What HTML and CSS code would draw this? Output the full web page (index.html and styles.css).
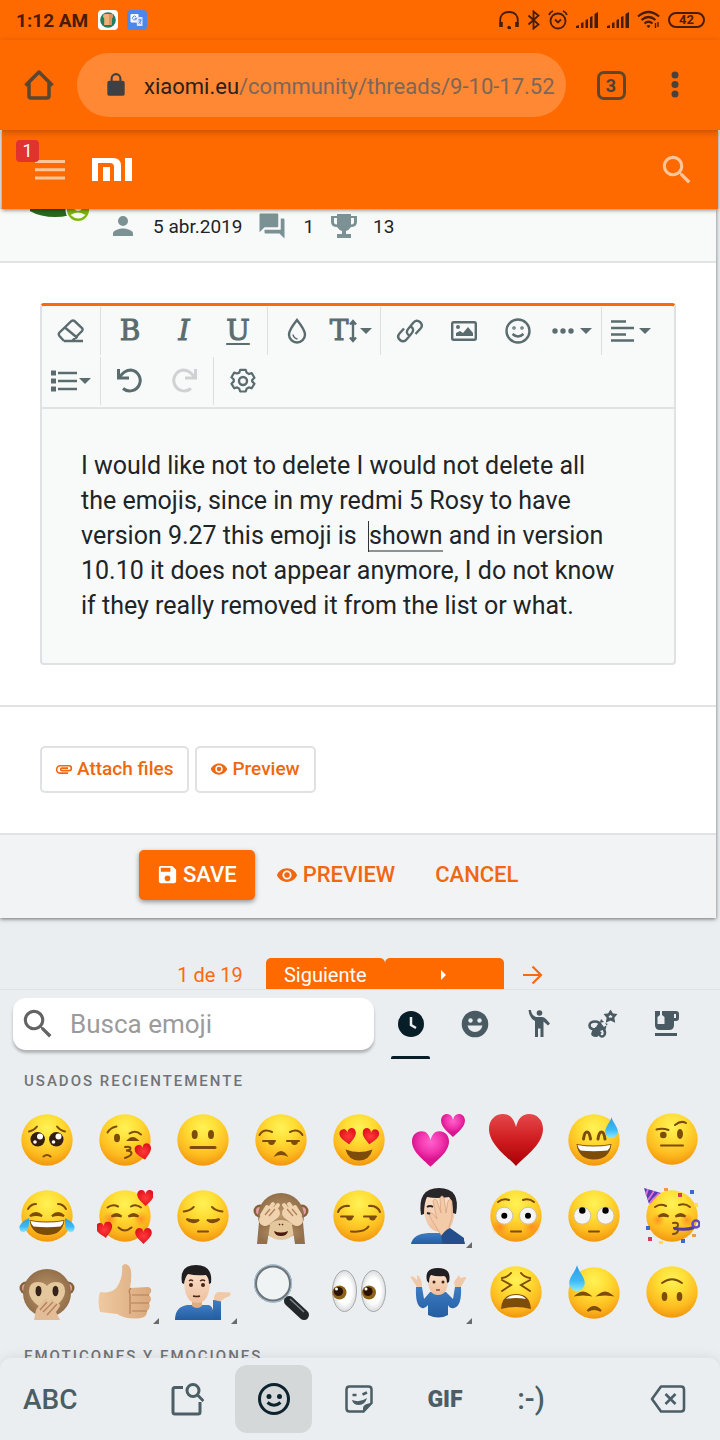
FILE: index.html
```html
<!DOCTYPE html>
<html lang="es">
<head>
<meta charset="utf-8">
<meta name="viewport" content="width=device-width, initial-scale=1">
<title>xiaomi.eu community</title>
<link rel="stylesheet" href="styles.css">
</head>
<body>
<svg class="defs" aria-hidden="true">
  <defs>
    <radialGradient id="gFace" cx=".5" cy=".26" r=".76"><stop offset="0" stop-color="#fff256"/><stop offset=".35" stop-color="#ffde35"/><stop offset=".72" stop-color="#fdbb20"/><stop offset="1" stop-color="#f0930c"/></radialGradient>
    <linearGradient id="gRed" x2="0" y2="1"><stop offset="0" stop-color="#e5484a"/><stop offset=".5" stop-color="#cf1c20"/><stop offset="1" stop-color="#a90003"/></linearGradient>
    <radialGradient id="gHeart"><stop offset="0" stop-color="#ff3b3b"/><stop offset="1" stop-color="#e3141e"/></radialGradient>
    <radialGradient id="gPink" cy=".3"><stop offset="0" stop-color="#ff62cc"/><stop offset=".6" stop-color="#f235ae"/><stop offset="1" stop-color="#d9148f"/></radialGradient>
    <linearGradient id="gDrop" x2="0" y2="1"><stop offset="0" stop-color="#2d9be6"/><stop offset=".6" stop-color="#3cb9f5"/><stop offset="1" stop-color="#8be9ff"/></linearGradient>
    <radialGradient id="gBlush"><stop offset="0" stop-color="#ff7a1e" stop-opacity=".7"/><stop offset="1" stop-color="#ff8c1e" stop-opacity="0"/></radialGradient>
    <radialGradient id="gFur"><stop offset="0" stop-color="#b9966a"/><stop offset="1" stop-color="#93704a"/></radialGradient>
    <linearGradient id="gSkin"><stop offset="0" stop-color="#efc9a0"/><stop offset="1" stop-color="#d9a87c"/></linearGradient>
    <linearGradient id="gPale" x2="0" y2="1"><stop offset="0" stop-color="#fce3cf"/><stop offset="1" stop-color="#eebf9c"/></linearGradient>
    <linearGradient id="gBlue" x2="0" y2="1"><stop offset="0" stop-color="#3d7cc4"/><stop offset="1" stop-color="#245d9f"/></linearGradient>
    <radialGradient id="gWhite"><stop offset=".6" stop-color="#fff"/><stop offset="1" stop-color="#d9dcde"/></radialGradient>
  </defs>
  <symbol id="face" viewBox="0 0 56 56"><circle cx="28" cy="28" r="25.7" fill="url(#gFace)"/></symbol>
  <symbol id="heart" viewBox="0 0 54 52"><path d="M27 52C20 44 0 31 0 15 0 6 6 0 14 0c7 0 11 5 13 13C29 5 33 0 40 0c8 0 14 6 14 15 0 16-20 29-27 37z"/></symbol>
  <symbol id="drop" viewBox="0 0 12 20"><path d="M6 0c1 5 6 9 6 14a6 6 0 0 1-12 0C0 9 5 5 6 0z" fill="url(#gDrop)"/></symbol>
  <symbol id="eye" viewBox="0 0 24 24"><path d="M12 4.500C7 4.500 2.730 7.610 1 12c1.730 4.390 6 7.500 11 7.500s9.270-3.110 11-7.500c-1.730-4.390-6-7.500-11-7.500zM12 17c-2.760 0-5-2.240-5-5s2.240-5 5-5 5 2.240 5 5-2.240 5-5 5zm0-8a3 3 0 1 0 0 6 3 3 0 0 0 0-6z"/></symbol>
  <symbol id="search" viewBox="0 0 24 24"><path d="M15.500 14h-.79l-.28-.27A6.471 6.471 0 0 0 16 9.500 6.500 6.500 0 1 0 9.500 16c1.610 0 3.090-.59 4.230-1.570l.27.28v.79l5 4.990L20.490 19l-4.990-5zm-6 0C7.010 14 5 11.990 5 9.500S7.010 5 9.500 5 14 7.010 14 9.500 11.990 14 9.500 14z"/></symbol>
  <symbol id="signal" viewBox="0 0 24 18"><path d="M1 17v-2l3-1v3zM6 17v-5l2.500-1v6zM10.500 17V9L13 8v9zM15 17V6l2.500-1v12zM19.500 17V3L23 1v16z"/></symbol>
</svg>

<header class="status">
  <span class="clock">1:12 AM</span>
  <svg class="app" viewBox="0 0 20 20"><rect width="20" height="20" rx="4" fill="#fff"/><circle cx="10" cy="10" r="7.800" fill="#1d7e63"/><path d="M5 6q0-2 2-2h6q2 0 2 2t-1.200 2.200V15H6.200V8.200Q5 8 5 6z" fill="#edb277"/><path d="M11 4h2q2 0 2 2t-1.200 2.200V15H11z" fill="#d9945a"/></svg>
  <svg class="app app-2" viewBox="0 0 20 20"><rect width="20" height="20" rx="4" fill="#4d86ec"/><rect x="3.500" y="4" width="8" height="8.500" rx="1" fill="#fff"/><path d="M9 7h6.500v9H10z" fill="#dbe5fa"/><path d="M9 6.700A2 2 0 1 0 9.500 8.300H7.500M11.500 10h3M13 9v1m1 0q-1 3-2.500 3.500m.5-2q.8 1.500 2 2" fill="none" stroke="#4d86ec"/></svg>
  <span class="push"></span>
  <svg width="22" height="20" viewBox="0 0 22 20" fill="none" stroke="#471d07" stroke-width="1.800"><path d="M3 15C0 5 6 2 11 2s11 3 8 13M10 18h3"/><path d="M3 12v5M19 12v5" stroke-width="3.500"/><circle cx="11" cy="17.500" r=".8"/></svg>
  <svg width="14" height="20" viewBox="0 0 14 20" fill="none" stroke="#471d07" stroke-width="1.800"><path d="M1.500 5.500l10 9-5 4V1.500l5 4-10 9"/></svg>
  <svg width="20" height="20" viewBox="0 0 20 20" fill="none" stroke="#471d07" stroke-width="1.800"><circle cx="10" cy="11" r="7.500"/><path d="M1 5q1-3 4-4m14 4q-1-3-4-4M7 9.500l3 3 3-3"/></svg>
  <svg width="24" height="18" fill="#471d07"><use href="#signal"/></svg>
  <svg width="24" height="18" fill="#471d07"><use href="#signal"/></svg>
  <svg width="24" height="20" viewBox="0 0 24 20" fill="none" stroke="#471d07" stroke-width="2.200"><path d="M1 6.500q10.500-9 21 0M4.500 10q7-6 14 0M7.500 13.500q4-3.500 8 0"/><path d="M11.500 18l-2-2q2-2 4 0z" fill="#471d07" stroke="none"/><path d="M18.500 13v5m2.500-6v5" stroke-width="1.400"/></svg>
  <span class="battery">42</span>
</header>

<nav class="browser">
  <button class="home" aria-label="Inicio"><svg width="30" height="32" viewBox="0 0 30 32" fill="none" stroke="#5b4630" stroke-width="3.500" stroke-linejoin="round"><path d="M1.500 16.500L15 3l13.500 13.500M5 14v13q0 2 2 2h16q2 0 2-2V14"/></svg></button>
  <button class="address"><svg width="26" height="26" viewBox="0 0 24 24" fill="#3e4043"><path d="M18 8h-1V6A5 5 0 0 0 7 6v2H6a2 2 0 0 0-2 2v10c0 1.100.9 2 2 2h12a2 2 0 0 0 2-2V10a2 2 0 0 0-2-2zM8.900 8V6a3.100 3.100 0 0 1 6.200 0v2z"/></svg><span class="url"><b>xiaomi.eu</b>/community/threads/9-10-17.52</span></button>
  <button class="tabs-count"><span>3</span></button>
  <button class="more" aria-label="Más"><svg width="8" height="28" viewBox="0 0 8 28" fill="#4c4139"><circle cx="4" cy="4" r="3.500"/><circle cx="4" cy="13.500" r="3.500"/><circle cx="4" cy="23" r="3.500"/></svg></button>
</nav>

<main class="page">
  <header class="site">
    <button class="menu" aria-label="Menú"><svg width="30" height="20" viewBox="0 0 30 20" stroke="#ffc59a" stroke-width="3"><path d="M0 1.500h30M0 9.800h30M0 18h30"/></svg><span class="badge">1</span></button>
    <a class="logo" href="#" aria-label="Mi"><svg width="40" height="24" viewBox="0 0 40 24" fill="#fff"><path d="M0 0h21q8 0 8 8v15h-7V9q0-4-4-4H6v18H0zM11 9h7v14h-7zM33 0h7v23h-7z"/></svg></a>
    <button class="find" aria-label="Buscar"><svg width="38" height="38" fill="#ffc59a"><use href="#search"/></svg></button>
  </header>
  <article class="card">
    <section class="user">
      <svg class="avatar" width="64" height="16" viewBox="0 0 64 16"><ellipse cx="25" cy="-12" rx="35" ry="20" fill="#28691f"/><circle cx="48" cy="1" r="12.500" fill="#f8fafa"/><circle cx="48" cy="1" r="11" fill="#80b70e"/><path d="M40.500 6q7.500-5 15 0-7 7-15 0z" fill="#f8fafa"/><circle cx="48" cy="-2" r="4" fill="#f8fafa"/></svg>
      <svg class="u-person" width="30" height="30" viewBox="0 0 24 24"><path d="M12 12a4 4 0 1 0 0-8 4 4 0 0 0 0 8zm0 2c-2.670 0-8 1.340-8 4v2h16v-2c0-2.660-5.330-4-8-4z"/></svg><span class="u-date">5 abr.2019</span>
      <svg width="30" height="30" viewBox="0 0 24 24"><path d="M21 6h-2v9H6v2c0 .55.45 1 1 1h11l4 4V7c0-.55-.45-1-1-1zm-4 6V3c0-.55-.45-1-1-1H3c-.55 0-1 .45-1 1v14l4-4h10c.55 0 1-.45 1-1z"/></svg><span class="u-num">1</span>
      <svg width="26" height="26" viewBox="0 0 26 26"><path d="M6 1h14v2h6v6q0 5-6 5-2 3-5 4v3h5v4H6v-4h5v-3q-3-1-5-4-6 0-6-5V3h6zM3 5v4q0 2.500 3 2.500V5zm20 0h-3v6.500q3 0 3-2.500z" fill-rule="evenodd"/></svg><span class="u-num">13</span>
    </section>
    <section class="compose">
      <div class="editor">
        <div class="toolbar" role="toolbar">
          <div class="group"><button aria-label="Clear"><svg width="28" height="24" viewBox="0 0 28 24"><path d="M7 22l-4.500-5q-1.500-2 0-3.500L14.500 2q1.500-1 3 0l7.500 7q1.200 1.500 0 3L15 22H7h19M8.500 9l12 10"/></svg></button></div>
          <div class="group"><button class="serif">B</button><button class="serif italic">I</button><button class="serif under">U</button></div>
          <div class="group"><button aria-label="Color"><svg width="20" height="26" viewBox="0 0 20 26"><path d="M10 2Q2 12 2 16.500a8 8 0 0 0 16 0Q18 12 10 2z"/><path d="M6 16.500q.5 3.500 4.500 4.500" stroke-width="1.600"/></svg></button><button aria-label="Size"><span class="serif">T</span><svg width="10" height="24" viewBox="0 0 10 24"><path d="M5 3v18M2 5.500L5 2l3 3.500M2 18.500L5 22l3-3.500"/></svg><i class="caret"></i></button></div>
          <div class="group"><button aria-label="Link"><svg width="28" height="28" viewBox="0 0 28 28" stroke-width="3"><path d="M13 18.500q-4-3-.5-7l5-6q3-3.500 6.500-.5t.5 6.500l-5 5.500M15 9.500q4 3 .5 7l-5 6q-3 3.500-6.500.5t-.5-6.500l4.500-5"/></svg></button><button aria-label="Image"><svg width="26" height="20" viewBox="0 0 26 20"><rect x="1.200" y="1.200" width="23.600" height="17.600" rx="1.500"/><path d="M5 15v-3l4-2 3 2 5-6 5 6v3z" fill="#5b6c6f" stroke="none"/><circle cx="7" cy="6" r="2" fill="#5b6c6f" stroke="none"/></svg></button><button aria-label="Smilies"><svg width="26" height="26" viewBox="0 0 26 26"><circle cx="13" cy="13" r="11.500"/><path d="M7.500 16q5.500 5 11 0"/><circle cx="9" cy="10" r=".6"/><circle cx="17" cy="10" r=".6"/></svg></button><button aria-label="Insert"><svg width="24" height="6" viewBox="0 0 24 6"><g fill="#5b6c6f" stroke="none"><circle cx="3" cy="3" r="2.700"/><circle cx="11" cy="3" r="2.700"/><circle cx="19" cy="3" r="2.700"/></g></svg><i class="caret gap"></i></button></div>
          <div class="group last"><button aria-label="Align"><svg width="24" height="22" viewBox="0 0 24 22"><path d="M0 1.500h15M0 8h23M0 14.500h15M0 20.500h23"/></svg><i class="caret gap"></i></button></div>
          <div class="group"><button aria-label="List"><svg width="26" height="22" viewBox="0 0 26 22"><path d="M7 3h19M7 11h19M7 19h19"/><path d="M0 3h5M0 11h5M0 19h5" stroke-width="5"/></svg><i class="caret"></i></button></div>
          <div class="group"><button aria-label="Undo"><svg class="thick" width="28" height="28" viewBox="0 0 28 28"><path d="M2.500 2v9H13M3 11Q8 3 15 3a10.500 10.500 0 1 1-8 18.500"/></svg></button><button aria-label="Redo" disabled><svg class="thick" width="28" height="28" viewBox="0 0 28 28"><path d="M25.500 2v9H15M25 11q-5-8-12-8a10.500 10.500 0 1 0 8 18.500"/></svg></button></div>
          <div class="group last"><button aria-label="Settings"><svg width="26" height="26" viewBox="0 0 26 26" stroke-linejoin="round"><path d="M10 1.500h6l1 3 2.500 1.500 3-1 3 5-2.500 2.500v1.500l2.500 2.500-3 5-3-1-2.500 1.500-1 3h-6l-1-3L6.500 20.500l-3 1-3-5L3 14v-2L.5 9.500l3-5 3 1L9 4.500z" transform="translate(1 .5) scale(.92)"/><circle cx="13" cy="13" r="4"/></svg></button></div>
        </div>
        <div class="text" role="textbox" aria-label="Message" aria-multiline="true" contenteditable="true" spellcheck="false">I would like not to delete I would not delete all<br>the emojis, since in my redmi 5 Rosy to have<br>version 9.27 this emoji is &nbsp;<span class="composing">shown</span> and in version<br>10.10 it does not appear anymore, I do not know<br>if they really removed it from the list or what.</div>
      </div>
    </section>
    <section class="extras">
      <button class="outline"><svg width="18" height="18" viewBox="1 1 22 22"><path d="M2 12.500C2 9.460 4.460 7 7.500 7H18a4 4 0 0 1 0 8H9.500a2.500 2.500 0 0 1 0-5H17v2H9.410c-.55 0-.55 1 0 1H18a2 2 0 0 0 0-4H7.500a3.500 3.500 0 0 0 0 7H17v2H7.500C4.460 18 2 15.540 2 12.500z"/></svg>Attach files</button>
      <button class="outline"><svg width="18" height="18"><use href="#eye"/></svg>Preview</button>
    </section>
    <section class="actions">
      <button class="save"><svg width="23" height="23" viewBox="0 0 24 24"><path d="M17 3H5a2 2 0 0 0-2 2v14c0 1.100.89 2 2 2h14c1.100 0 2-.9 2-2V7l-4-4zm-5 16a3 3 0 1 1 0-6 3 3 0 0 1 0 6zm3-10H5V5h10v4z"/></svg>SAVE</button>
      <button class="flat"><svg width="22" height="22"><use href="#eye"/></svg>PREVIEW</button>
      <button class="flat cancel">CANCEL</button>
    </section>
  </article>
  <nav class="pager">
    <a class="count" href="#">1 de 19</a>
    <a class="pg" href="#">Siguiente</a><a class="pg" href="#" aria-label="Siguiente"><svg width="6" height="10" viewBox="0 0 6 10"><path d="M0 0l5 5-5 5z" fill="#fff"/></svg></a>
    <a class="end" href="#" aria-label="Última"><svg width="20" height="20" viewBox="0 0 20 20" fill="none" stroke="#f96a0b" stroke-width="2.200"><path d="M0 10h18M9.500 1.500L18 10l-8.500 8.500"/></svg></a>
  </nav>
</main>

<section class="keyboard">
  <div class="kb-top">
    <label class="kb-search"><svg width="38" height="38" fill="#636363"><use href="#search"/></svg><input type="text" placeholder="Busca emoji" aria-label="Busca emoji"></label>
    <div class="cats">
      <button class="cat on" aria-label="Recientes"><svg width="28" height="28" viewBox="0 0 28 28"><circle cx="14" cy="14" r="13" fill="#071e29"/><path d="M14 7v8l5 3" fill="none" stroke="#e9edf0" stroke-width="2.500"/></svg></button>
      <button class="cat" aria-label="Caras"><svg width="28" height="28" viewBox="0 0 28 28"><circle cx="14" cy="14" r="13.300"/><g fill="#e9edf0"><circle cx="9.500" cy="10.500" r="2.200"/><circle cx="18.500" cy="10.500" r="2.200"/><path d="M6.500 15.500h15q-1.500 6.500-7.500 6.500t-7.500-6.500z"/></g></svg></button>
      <button class="cat" aria-label="Personas"><svg width="24" height="28" viewBox="0 0 24 28"><circle cx="12.500" cy="3" r="2.800"/><path d="M1.500 0h2.500q0 5 5 7h6q2 0 4 2l4 4.500-2 2-4.500-4V27h-3v-8.500h-2.500V27H8V11Q2 8 1.500 0z"/></svg></button>
      <button class="cat" aria-label="Naturaleza"><svg width="30" height="28" viewBox="0 0 30 28"><g fill="none" stroke="#495a62" stroke-width="2.600"><path d="M22.500 2l1.500 2.500 3 .5-2 2.500.5 3-3-1.500-3 1.500.5-3-2-2.500 3-.5z"/><ellipse cx="7" cy="15.500" rx="5.500" ry="4"/><ellipse cx="14" cy="22.500" rx="3" ry="4"/></g><path d="M4 21q-3 6 5 6l7-6q5-5 0-9l-5 1zM12 12l1-3 4 4 3 1-4 3z"/><circle cx="7" cy="15.500" r="1.800" fill="#e9edf0"/><path d="M12 21l3-1v4z" fill="#e9edf0"/></svg></button>
      <button class="cat" aria-label="Comida"><svg width="26" height="26" viewBox="0 0 26 26"><path d="M1 0h21q3 0 3 3v4q0 3-3 3h-2v4q0 5-5 5H6q-5 0-5-5zm19 3v4h2V3zM1 22h22v3H1z" fill-rule="evenodd"/><path d="M6 0v4L3.500 6v7h7V6L8 4V0z" fill="#e9edf0"/></svg></button>
    </div>
  </div>
  <div class="kb-list">
    <h2 class="kb-title">USADOS RECIENTEMENTE</h2>
    <div class="grid">
      <button aria-label="Suplicante"><svg viewBox="0 0 56 56"><use href="#face"/><g class="ln"><path d="M10 19.500q5-1 8-5M38 14.500q3 4 8 5M24.500 44.500q3.500-3 7 0"/></g><circle cx="18.700" cy="27.300" r="7.200" fill="#351d12"/><circle cx="37.300" cy="27.300" r="7.200" fill="#351d12"/><g fill="#fff"><circle cx="21" cy="24.500" r="3"/><circle cx="39.500" cy="24.500" r="3"/><circle cx="16" cy="30" r="1.800"/><circle cx="34.500" cy="30" r="1.800"/></g></svg></button>
      <button aria-label="Beso"><svg viewBox="0 0 56 56"><use href="#face"/><ellipse class="ey" cx="20" cy="26" rx="3" ry="4.200"/><g class="ln"><path d="M10.500 20.500q3-5 9-6M32.500 21.500q6-4 11.500 1M31.500 28q4-4 8.500 0zM28 35q5-1 5.500 1t-4.500 2.500q5 0 5.500 2.500T28 46"/></g><use href="#heart" x="38" y="32" width="17" height="16" fill="url(#gHeart)" transform="rotate(-12 46 40)"/></svg></button>
      <button aria-label="Neutral"><svg viewBox="0 0 56 56"><use href="#face"/><ellipse class="ey" cx="19.700" cy="22.500" rx="3" ry="4.500"/><ellipse class="ey" cx="36" cy="22.500" rx="3" ry="4.500"/><path class="ln w3" d="M16 35.500h24"/></svg></button>
      <button aria-label="Molesto"><svg viewBox="0 0 56 56"><use href="#face"/><g class="ln"><path d="M6.500 23q4-7 12.500-3M37 20q8-4 12.500 3M10 29h12M34 29h12"/></g><path class="ey" d="M15 29h7q0 4-3.500 4T15 29zM38 29h7q0 4-3.500 4T38 29zM20.500 45q7.500-12 15 0-7.500-4-15 0z"/></svg></button>
      <button aria-label="Enamorado"><svg viewBox="0 0 56 56"><use href="#face"/><g fill="url(#gHeart)"><use href="#heart" x="8.500" y="16.500" width="17" height="16" transform="rotate(-8 17 24)"/><use href="#heart" x="31" y="16.500" width="17" height="16" transform="rotate(8 39 24)"/></g><path d="M14.500 37.500q13.500 5 27 0-3 11-13.500 11t-13.500-11z" fill="#7d4b0a"/></svg></button>
      <button aria-label="Dos corazones"><svg viewBox="0 0 56 56"><g fill="url(#gPink)"><use href="#heart" x="2" y="19" width="37" height="36"/><use href="#heart" x="31" y="2" width="24" height="23"/></g></svg></button>
      <button aria-label="Corazón"><svg viewBox="0 0 56 56"><use href="#heart" x="1" y="2" width="54" height="52" fill="url(#gRed)"/></svg></button>
      <button aria-label="Sudor"><svg viewBox="0 0 56 56"><use href="#face"/><g class="ln w3"><path d="M17.500 27q1-7 3.500-7t3.500 7M32 27q1-7 3.500-7t3.500 7"/></g><path d="M10.500 32q17.500 3 35 0-2 15.500-17.500 15.500T10.500 32z" fill="#7d4b0a"/><path d="M11.500 33q16.500 3 33 0-.5 4-3 5.500-13.500 1.500-27 0-2.500-2-3-5.500z" fill="#fff"/><use href="#drop" x="39" y="5" width="13" height="21"/></svg></button>
      <button aria-label="Ceja levantada"><svg viewBox="0 0 56 56"><use href="#face" y="-1"/><ellipse class="ey" cx="19.300" cy="23" rx="3.300" ry="3.200"/><ellipse class="ey" cx="36" cy="22" rx="3" ry="5"/><path class="ln" d="M12.500 17.500q6-1.500 12 .500M31 13q6-5 11-2M17 33.500h22"/></svg></button>

      <button aria-label="Risa"><svg viewBox="0 0 56 56"><use href="#face"/><g class="ln"><path d="M9 21q3-5 8-5M39 16q5 0 8 5M11 28q6-6 12 0-6-2-12 0zM33 28q6-6 12 0-6-2-12 0z"/></g><path d="M10.500 32q17.500 3 35 0-2 15-17.500 15T10.500 32z" fill="#7d4b0a"/><path d="M11.500 33q16.500 3 33 0-.5 4-3 5.500-13.500 1.500-27 0-2.500-2-3-5.500z" fill="#fff"/><path d="M10 30Q0 35 .5 40t5 4Q11 42 10 30zM46 30q10 5 9.500 10t-5 4Q45 42 46 30z" fill="url(#gDrop)"/></svg></button>
      <button aria-label="Cariño"><svg viewBox="0 0 56 56"><use href="#face"/><circle cx="13" cy="31" r="8" fill="url(#gBlush)"/><circle cx="44" cy="31" r="8" fill="url(#gBlush)"/><g class="ln"><path d="M10.500 19.500q5-4 10.500-1M34 18.500q5-3 10 1M14.500 28.500q5-5 10 0-5-1.500-10 0zM31.500 28.500q5-5 10 0-5-1.500-10 0zM21.500 39.500q6 6 13 0"/></g><g fill="url(#gHeart)"><use href="#heart" x="40" y="2" width="17" height="16"/><use href="#heart" x="-1" y="34" width="17" height="16" transform="rotate(-10 8 42)"/><use href="#heart" x="38" y="40" width="17" height="16"/></g></svg></button>
      <button aria-label="Pensativo"><svg viewBox="0 0 56 56"><use href="#face"/><path class="ln" d="M8.700 23.500q6-.5 10-4.500M37 19q4 4 10.500 4.500M11.500 31q6 6 12.500 1-6 1-12.500-1zM32 32q6.500 5 12.500-1-6 2-12.500 1zM23 43.500h10"/></svg></button>
      <button aria-label="Mono ojos tapados"><svg viewBox="0 0 56 56"><circle cx="7" cy="23" r="6.500" fill="#86623b"/><circle cx="49" cy="23" r="6.500" fill="#86623b"/><circle cx="7" cy="23" r="4" fill="#e79ea1"/><circle cx="49" cy="23" r="4" fill="#e79ea1"/><circle cx="28" cy="28" r="23" fill="url(#gFur)"/><ellipse cx="28" cy="42" rx="14" ry="10" fill="#e5c79e"/><path d="M21 43q7 3 14 0-1 5-7 5t-7-5z" fill="#4a1c10"/><path d="M4 56l2-22 11 3-3 19zM52 56l-2-22-11 3 3 19z" fill="url(#gFur)"/><g fill="none" stroke="#efd2ae" stroke-linecap="round"><path d="M12 32l9-7M44 32l-9-7" stroke-width="12"/><path d="M9 27l5-8M12 27l8-11M16 29l9-12M47 27l-5-8M44 27l-8-11M40 29l-9-12" stroke-width="4"/></g><g class="cr"><path d="M12 27l5-6M16 28l6-7M44 27l-5-6M40 28l-6-7"/></g><path d="M26 36l1 1m3-1l-1 1" stroke="#4a2c14" stroke-width="1.500"/></svg></button>
      <button aria-label="Sonrisa pícara"><svg viewBox="0 0 56 56"><use href="#face"/><path class="ln" d="M7 24q3-7 11-6M38 18q8-1 11 6M10 28.500h12M33 28.500h12M20 43.500q14 1 17.500-5"/><path class="ey" d="M15 28h7q0 4.500-3.500 4.500T15 28zM38 28h7q0 4.500-3.500 4.500T38 28z"/></svg></button>
      <button class="skin" aria-label="Palmada"><svg viewBox="0 0 56 56"><path d="M1 56q2-10 17-11h22q14 1 15 11z" fill="url(#gBlue)"/><path d="M13 16q0-12 16-12t16 14q0 26-15 26T13 16z" fill="url(#gPale)"/><path d="M11 27Q7 0 29 0t17 26l-3-1q0-12-4-16-12 2-22 0-3 6-3 17z" fill="#292629"/><path d="M17 19q3-2 6 0M17 25l4 1" stroke="#292629" stroke-width="2" fill="none"/><path d="M33 50L20 29q-1-4 2-4l5 6-4-18q2-4 4 0l4 12-1-15q2-4 4 0l2 15 2-12q3-3 4 1v15l-3 10 1 9z" fill="#f4cba9" stroke="#d8a47f" stroke-width=".8"/><path d="M31 48q4-6 9-8l14 10v6H33z" fill="#254f8c"/></svg></button>
      <button aria-label="Sonrojado"><svg viewBox="0 0 56 56"><use href="#face"/><circle cx="12" cy="39" r="9" fill="url(#gBlush)"/><circle cx="44" cy="39" r="9" fill="url(#gBlush)"/><circle cx="16.300" cy="27.700" r="8.500" class="bw"/><circle cx="40" cy="27.700" r="8.500" class="bw"/><circle cx="16.300" cy="27.700" r="3"/><circle cx="40" cy="27.700" r="3"/><path class="ln" d="M10 14q5-4 11-2M35 12q6-2 11 2M23 43.500h10"/></svg></button>
      <button aria-label="Ojos en blanco"><svg viewBox="0 0 56 56"><use href="#face"/><circle cx="16.300" cy="27.700" r="8.500" class="bw"/><circle cx="39.500" cy="27.700" r="8.500" class="bw"/><circle cx="16.300" cy="22.500" r="3.200"/><circle cx="39.500" cy="22.500" r="3.200"/><path class="ln" d="M23 43.500h10"/></svg></button>
      <button aria-label="Fiesta"><svg viewBox="0 0 56 56"><use href="#face"/><path d="M0 0l17 5Q8 9 5 16z" fill="#593bb2"/><path d="M4 1l-2 6M10 3L4 12M15 5l-9 10" stroke="#e173d6" stroke-width="1.800"/><circle cx="14" cy="32" r="7" fill="url(#gBlush)"/><circle cx="43" cy="32" r="7" fill="url(#gBlush)"/><path class="ln" d="M11 19q5-4 11-1M35 17q6-2 11 2M14.500 28.500q5-5 10 0-5-1.500-10 0zM31.500 28.500q5-5 10 0-5-1.500-10 0zM29 35q5-1 5 2t-5 3q6 0 5 3t-5 3"/><path d="M30 40.500q12 2 20-1" fill="none" stroke="#513b9c" stroke-width="3"/><circle cx="52" cy="36" r="3.500" fill="none" stroke="#654bb9" stroke-width="2.500"/><path d="M34 5h4v4h-4zM4 49h4v4H4z" fill="#dc3863"/><path d="M46 2h4v4h-4zM2 38h4v4H2zM37 51h4v4h-4z" fill="#376bd0"/><path d="M50 15h4v4h-4zM15 53h4v3h-4z" fill="#ffde4c"/><path d="M20 0h4v3h-4zM48 46h4v3h-4z" fill="#ef9a48"/></svg></button>

      <button aria-label="Mono boca tapada"><svg viewBox="0 0 56 56"><circle cx="7" cy="24" r="6.500" fill="#86623b"/><circle cx="49" cy="24" r="6.500" fill="#86623b"/><circle cx="7" cy="24" r="4" fill="#e79ea1"/><circle cx="49" cy="24" r="4" fill="#e79ea1"/><circle cx="28" cy="29" r="24" fill="url(#gFur)"/><path d="M10 27q0-9 9-9 6 0 9 4 3-4 9-4 9 0 9 9 0 11-18 20-18-9-18-20z" fill="#e5c79e"/><ellipse cx="19.500" cy="27" rx="3" ry="5.300" fill="#33231b"/><ellipse cx="36.500" cy="27" rx="3" ry="5.300" fill="#33231b"/><path d="M15 56l2-10q3-6 9-11 4-2 2 3l5-3q3 0 1 3 4-1 3 2 4-2 4 2l-4 6 4 8z" fill="#e3bd98"/><path class="cr" d="M28 38l-7 8M34 38l-10 10M38 40l-10 11"/></svg></button>
      <button class="skin" aria-label="Pulgar arriba"><svg viewBox="0 0 56 56"><path d="M3 28q12 2 17-5 6-9 5-21 3-4 7 0 4 5 1 22l18-1q4 1 3 5l-2 3q4 4 0 8 2 5-2 8 0 6-6 7-14 2-24-4L3 48Q0 37 3 28z" fill="url(#gSkin)"/><path class="cr" d="M34 24q-3 3-1 6M35 31h17M34 39h18M35 47h15M33 30v20"/></svg></button>
      <button class="skin" aria-label="Hombre mostrando"><svg viewBox="0 0 56 56"><path d="M0 56q0-13 12-15h21q6 0 6 15z" fill="url(#gBlue)"/><path d="M38 56V36h8v20z" fill="url(#gBlue)"/><path d="M17 35h10v7q-5 4-10 0z" fill="#e0ac84"/><path d="M9 15q0-10 13-10t13 11q0 23-13 23T9 15z" fill="url(#gPale)"/><path d="M7 19Q4 1 21 1t15 18l-2 1q0-6-3-9-10 1-18-1-3 3-4 10z" fill="#211e22"/><path d="M14 17q2-2 4 0M25 17q3-2 5 0M18 32q4 1 7 0" fill="none" stroke="#4b281d" stroke-width="1.500"/><circle cx="16" cy="21" r="2" fill="#452313"/><circle cx="28" cy="21" r="2" fill="#452313"/><path d="M39 36q0-8 5-8l11 .5q2 1-1 4-5 1-8 5z" fill="#f2c9a6"/></svg></button>
      <button aria-label="Lupa"><svg viewBox="0 0 56 56"><path d="M31 32l9 9" stroke="#8c9296" stroke-width="4"/><path d="M36 37l15 14" stroke="#22272a" stroke-width="10" stroke-linecap="round"/><path d="M37 35l14 13" stroke="#7f878b" stroke-width="1.500"/><circle cx="20" cy="19.500" r="17.500" fill="#f0f3f4" stroke="#6d7478" stroke-width="3"/><circle cx="20" cy="19.500" r="18.500" fill="none" stroke="#adc8e3"/></svg></button>
      <button aria-label="Ojos"><svg viewBox="0 0 56 56"><g fill="url(#gWhite)" stroke="#a8a8aa"><ellipse cx="13.500" cy="27" rx="12" ry="20.500"/><ellipse cx="42.500" cy="27" rx="12" ry="20.500"/></g><circle cx="8.500" cy="28.500" r="7" fill="#8f6316"/><circle cx="38" cy="28.500" r="7" fill="#8f6316"/><circle cx="7.500" cy="27.500" r="4.600" fill="#2a1208"/><circle cx="37" cy="27.500" r="4.600" fill="#2a1208"/><circle cx="5.500" cy="25" r="1.500" fill="#fff"/><circle cx="35" cy="25" r="1.500" fill="#fff"/></svg></button>
      <button class="skin" aria-label="Encogerse"><svg viewBox="0 0 56 56"><path d="M6 23h6l2 12 6-7h16l7 7 2-12h6q1 19-7 21-4 1-6-3v10q-9 5-20 0V41q-3 4-6 3Q5 42 6 23z" fill="url(#gBlue)"/><path d="M7 23L1 14q-1-3 3-1l3 3V11q5 2 5 12zM45 23l-1-5 5-7 1 3 5-1q3 0 0 3l-4 7z" fill="#f2c9a6"/><path d="M18 15q0-9 10-9t10 10q0 15-10 15T18 15z" fill="url(#gPale)"/><path d="M17 17Q14 4 28 4t11 14l-2 1q0-6-3-7-7 1-13-1-2 2-2 8z" fill="#211e22"/><circle cx="24" cy="18" r="1.500" fill="#452313"/><circle cx="33" cy="18" r="1.500" fill="#452313"/><path d="M26 26h4" stroke="#9b4942" stroke-width="1.500"/></svg></button>
      <button aria-label="Cansado"><svg viewBox="0 0 56 56"><use href="#face"/><path class="ln" d="M14 14q6-1 9-5M33 9q3 4 9 5M14 16l9 5-9 6M42 16l-9 5 9 6"/><path d="M13 45q1-15 15-15t15 15q-15-4-30 0z" fill="#7d4b0a"/><path d="M18 35q3-4 10-4t10 4q-10-2-20 0z" fill="#fff"/></svg></button>
      <button aria-label="Sudor frío"><svg viewBox="0 0 56 56"><use href="#face" y="1"/><path class="ln" d="M11 31q6-5 12 0-6-1-12 0zM33 31q6-5 12 0-6-1-12 0zM21.500 47q6.500-8 13.500 0-7-4-13.500 0z"/><use href="#drop" x="3" y="1" width="16" height="26"/></svg></button>
      <button aria-label="Al revés"><svg viewBox="0 0 56 56"><use href="#face"/><ellipse class="ey" cx="20.500" cy="32.500" rx="2.800" ry="4.500"/><ellipse class="ey" cx="35.500" cy="32.500" rx="2.800" ry="4.500"/><path class="ln" d="M18 19q10-7.500 20 0"/></svg></button>
    </div>
    <h2 class="kb-title next">EMOTICONES Y EMOCIONES</h2>
  </div>
  <div class="kb-bar">
    <button class="abc">ABC</button>
    <button aria-label="Buscar contenido"><svg width="34" height="34" viewBox="0 0 34 34" fill="none" stroke="#4b5e66" stroke-width="3"><path d="M13 5.500H5q-2 0-2 2V30q0 2 2 2h23q2 0 2-2V20"/><circle cx="23" cy="8.500" r="6"/><path d="M27.500 13l6 6"/></svg></button>
    <button class="active" aria-label="Emoji"><svg width="34" height="34" viewBox="0 0 34 34" fill="none" stroke="#0c222c" stroke-width="3"><circle cx="17" cy="17" r="14.500"/><path d="M10.500 20.500q6.500 5.500 13 0"/><g fill="#0c222c" stroke="none"><circle cx="12" cy="14.500" r="2.500"/><circle cx="22.500" cy="14.500" r="2.500"/></g></svg></button>
    <button aria-label="Stickers"><svg width="28" height="28" viewBox="0 0 28 28" fill="none" stroke="#4b5e66" stroke-width="2.500"><path d="M4.500 1.500h19q3 0 3 3V18l-8 8.500h-14q-3 0-3-3v-19q0-3 3-3z"/><path d="M7.500 10h4M17.500 9.500l4.500-2"/><path d="M7 15q8 3 15-2-2 7-8 7t-7-5z" fill="#4b5e66" stroke="none"/><path d="M18 26v-3q0-4 8-5z" fill="#4b5e66" stroke="none"/></svg></button>
    <button class="gif">GIF</button>
    <button class="emoticon">:-)</button>
    <button class="del" aria-label="Borrar"><svg width="36" height="28" viewBox="0 0 36 28" fill="none" stroke="#4b5e66" stroke-width="2.600"><path d="M11 1.500h20q3 0 3 3v19q0 3-3 3H11L2 14zM15.500 9l10 10m0-10l-10 10" stroke-linejoin="round"/></svg></button>
  </div>
</section>
</body>
</html>
```

FILE: styles.css
```css
* { box-sizing: border-box; }
body {
  margin: 0;
  height: 100vh;
  display: flex;
  flex-direction: column;
  overflow: hidden;
  background: #ebeef1;
  color: #202426;
  font-family: Roboto, "Liberation Sans", sans-serif;
}
button, input { font: inherit; color: inherit; margin: 0; padding: 0; border: 0; background: none; }
a { text-decoration: none; color: #f96a0b; }
svg { display: block; flex: none; }
.defs { position: absolute; width: 0; height: 0; }

.status {
  flex: none;
  display: flex;
  align-items: center;
  gap: 7px;
  height: 40px;
  padding: 0 15px 0 16px;
  background: #ff6a00;
  color: #471d07;
}
.clock { font-size: 19px; font-weight: 700; margin-right: 3px; }
.app { width: 20px; height: 20px; }
.app-2 { margin-left: 2px; }
.push { flex: 1; }
.battery {
  width: 37px;
  height: 16px;
  border: 2px solid #471d07;
  border-radius: 8px;
  font-size: 13px;
  font-weight: 700;
  line-height: 12px;
  text-align: center;
}

.browser {
  flex: none;
  display: flex;
  align-items: center;
  height: 90px;
  padding-right: 26px;
  background: #ff6a00;
  position: relative;
  z-index: 2;
  box-shadow: 0 2px 7px rgba(0, 0, 0, .25);
}
.home { width: 77px; display: flex; justify-content: center; }
.address {
  flex: 1;
  min-width: 0;
  height: 64px;
  border-radius: 32px;
  background: #ff8834;
  display: flex;
  align-items: center;
  gap: 15px;
  padding: 0 12px 0 26px;
}
.url { padding-top: 2px; font-size: 22px; color: #7b675a; white-space: nowrap; }
.url b { font-weight: 400; color: #2b201b; }
.tabs-count { width: 90px; display: flex; justify-content: center; }
.tabs-count span {
  width: 29px;
  height: 29px;
  border: 3px solid #5b4630;
  border-radius: 7px;
  font-size: 18px;
  font-weight: 700;
  line-height: 23px;
  color: #4c4139;
}
.more { width: 38px; display: flex; justify-content: center; }

.page { flex: 1; min-height: 0; overflow: hidden; }
.site {
  display: flex;
  align-items: center;
  height: 79px;
  margin: 0 2px;
  padding: 0 22px 0 33px;
  background: #ff6a00;
  position: relative;
  z-index: 1;
  box-shadow: 0 1px 4px rgba(0, 0, 0, .5);
}
.menu { position: relative; }
.badge {
  position: absolute;
  left: -19px;
  top: -20px;
  width: 23px;
  height: 22px;
  border-radius: 4px;
  background: #e0332f;
  color: #fff;
  font-size: 18px;
  line-height: 22px;
}
.logo { margin-left: 27px; }
.find { margin-left: auto; }

.card { margin-right: 4px; background: #fff; box-shadow: 0 1px 4px rgba(0, 0, 0, .55); }
.user {
  display: flex;
  align-items: center;
  height: 54px;
  padding: 0 30px 18px;
  border-bottom: 2px solid #e1e4e5;
  background: #f8fafa;
  font-size: 19px;
}
.user svg { fill: #7b9193; }
.avatar { align-self: flex-start; }
.u-person { margin-left: 14px; margin-right: 15px; }
.u-date { margin-right: 15px; }
.u-num { margin: 0 17px 0 16px; }

.compose { padding: 40px; border-bottom: 2px solid #e1e2e3; }
.editor {
  border: 2px solid #dfe2e2;
  border-top: 3px solid #f96a0b;
  border-radius: 4px;
  background: #f8fafa;
}
.toolbar { display: flex; flex-wrap: wrap; padding-bottom: 1px; border-bottom: 2px solid #e1e2e3; }
.group { display: flex; height: 48px; margin: 1px 0; padding: 0 2px; border-right: 1px solid #dcdfe0; }
.group.last { margin-right: auto; border: 0; }
.group button {
  width: 54px;
  display: flex;
  align-items: center;
  justify-content: center;
  color: #5b6c6f;
}
.group svg { fill: none; stroke: #5b6c6f; stroke-width: 2.4; }
.group svg.thick { stroke-width: 3; }
.group button[disabled] svg { stroke: #cfd2d2; }
.group .serif { font-family: "DejaVu Serif", "Liberation Serif", serif; font-size: 28px; line-height: 30px; -webkit-text-stroke: 1px #5b6c6f; }
.group .italic { font-style: italic; }
.group .under { text-decoration: underline; text-decoration-thickness: 2px; text-underline-offset: 3px; }
.caret { border: 6px solid transparent; border-top-color: #5b6c6f; border-bottom: 0; margin-left: 2px; }
.caret.gap { margin-left: 4px; }
.text { padding: 39px 38px 40px 39px; font-size: 25px; line-height: 35px; outline: 0; white-space: nowrap; }
.composing { border-bottom: 2px solid #8e9293; box-shadow: -1px 0 #303436; }

.extras { display: flex; gap: 6px; padding: 39px 40px 40px; border-bottom: 2px solid #e1e2e3; }
.outline {
  display: flex;
  align-items: center;
  gap: 4px;
  height: 47px;
  padding: 0 14px 2px 13px;
  border: 2px solid #e0e1e2;
  border-radius: 5px;
  color: #f0670f;
  font-size: 19px;
  font-weight: 500;
}
.outline svg, .flat svg { fill: #f0670f; }
.actions { display: flex; align-items: center; height: 83px; padding: 0 20px 4px 139px; background: #f2f3f5; }
.save {
  display: flex;
  align-items: center;
  gap: 4px;
  height: 50px;
  padding: 0 18px 0 17px;
  border-radius: 5px;
  background: #ff6a00;
  box-shadow: 0 2px 5px rgba(0, 0, 0, .4);
  color: #fff;
  font-size: 22px;
  font-weight: 500;
}
.save svg { fill: #fff; }
.flat { display: flex; align-items: center; gap: 5px; margin-left: 21px; color: #f0670f; font-size: 22px; font-weight: 500; }
.flat.cancel { margin-left: 40px; }

.pager { display: flex; justify-content: center; align-items: center; padding-top: 40px; font-size: 20px; }
.count { margin-right: 23px; }
.pg {
  width: 119px;
  height: 34px;
  display: flex;
  align-items: center;
  justify-content: center;
  border-radius: 5px 5px 0 0;
  background: #ff6a00;
  color: #fff;
}
.end { margin-left: 19px; }

.keyboard { flex: none; background: #ebeef1; border-top: 1px solid #e0e3e6; position: relative; }
.kb-top { display: flex; gap: 5px; height: 69px; padding: 8px 21px 0 13px; }
.kb-search {
  flex: 1;
  min-width: 0;
  display: flex;
  align-items: center;
  gap: 13px;
  height: 52px;
  padding-left: 6px;
  border-radius: 13px;
  background: #fff;
  box-shadow: 0 3px 3px rgba(0, 0, 0, .25);
}
.kb-search input { flex: 1; min-width: 0; font-size: 26px; outline: 0; }
.kb-search input::placeholder { color: #9b9b9b; opacity: 1; }
.cats { display: flex; }
.cat { width: 64px; height: 61px; display: flex; justify-content: center; align-items: center; padding-bottom: 9px; position: relative; fill: #495a62; }
.cat.on::after { content: ""; position: absolute; left: 12px; bottom: 0; width: 39px; height: 3px; border-radius: 2px 2px 0 0; background: #071e29; }
.kb-list { overflow: hidden; height: 299px; }
.kb-title {
  margin: 0;
  padding: 12px 24px 11px;
  font-size: 15px;
  font-weight: 500;
  line-height: 20px;
  letter-spacing: 2px;
  color: #707476;
}
.kb-title.next { padding-top: 16px; }
.grid { display: grid; grid-template-columns: repeat(9, 1fr); padding: 0 9px 0 8px; }
.grid button { height: 76px; display: flex; align-items: center; justify-content: center; position: relative; }
.grid svg { width: 56px; height: 56px; }
.skin::after { content: ""; position: absolute; right: 5px; bottom: 6px; border-left: 6px solid transparent; border-bottom: 6px solid #666b6e; }
.ln { fill: none; stroke: #7d4b0a; stroke-width: 2; stroke-linecap: round; }
.w3 { stroke-width: 3; }
.ey { fill: #7d4b0a; }
.bw { fill: #f4f4f4; stroke: #c9bfae; }
.cr { fill: none; stroke: #b27f57; stroke-width: 1.2; }
.kb-bar {
  display: grid;
  grid-template-columns: 144fr repeat(5, 86fr) 146fr;
  align-items: center;
  height: 82px;
  border-radius: 12px 12px 0 0;
  background: #ebeef1;
  box-shadow: 0 -2px 12px rgba(0, 0, 0, .07);
  position: relative;
  color: #4b5e66;
}
.kb-bar button { height: 68px; display: flex; align-items: center; justify-content: center; }
.kb-bar .abc { justify-content: flex-start; padding-left: 23px; font-size: 28px; font-weight: 500; }
.kb-bar .active { margin: 0 4px 0 5px; border-radius: 12px; background: #d4d8d9; }
.kb-bar .gif { font-size: 23px; font-weight: 900; }
.kb-bar .emoticon { font-size: 29px; font-weight: 500; }
.kb-bar .del { justify-content: flex-end; padding-right: 34px; }
```
